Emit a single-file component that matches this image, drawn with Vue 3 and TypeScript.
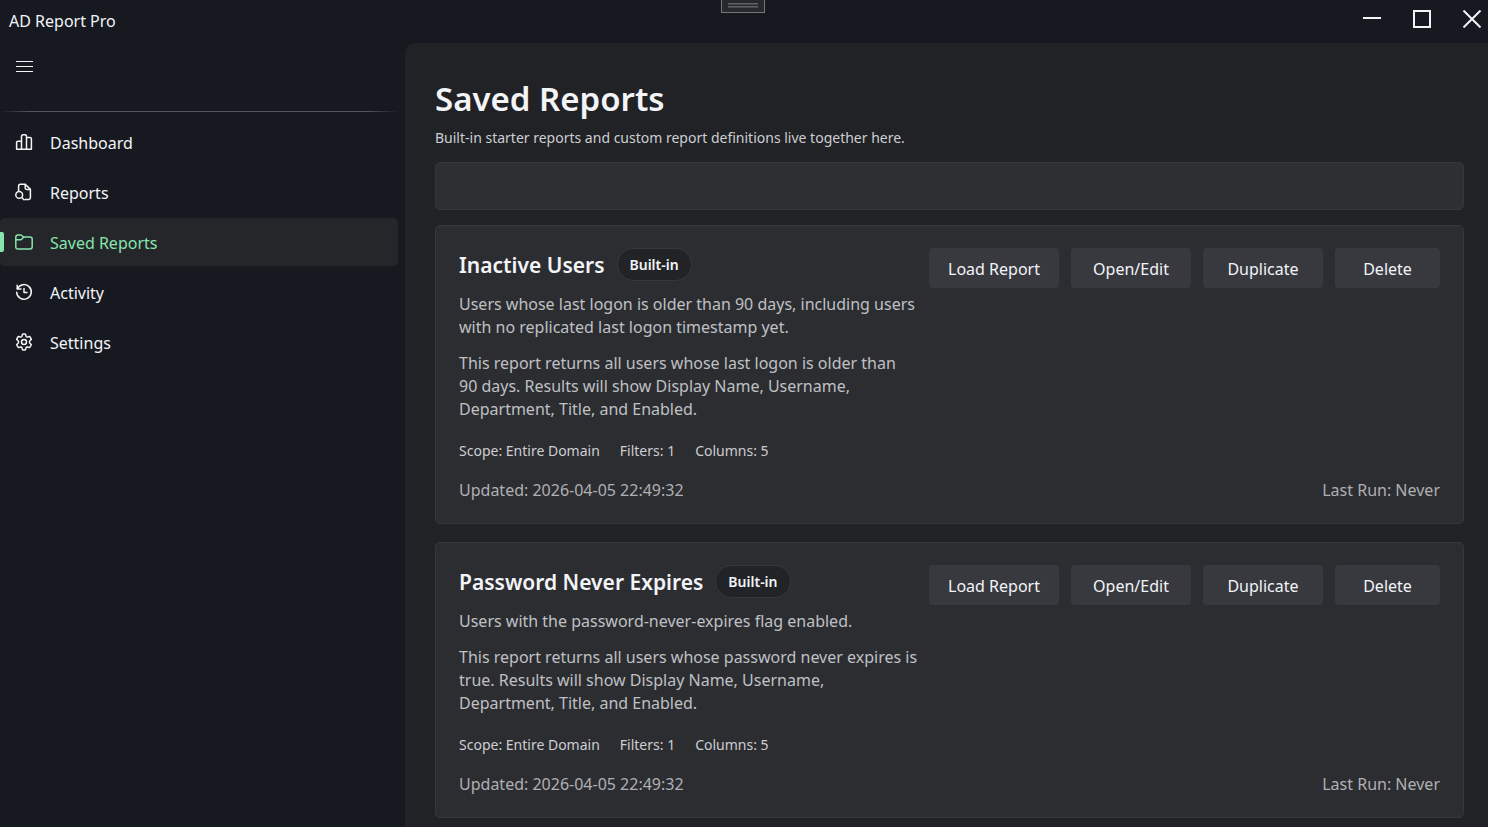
<script setup lang="ts">
import { ref } from 'vue'

interface NavItem {
  id: string
  label: string
}

interface Report {
  name: string
  description: string
  summary: string
  scope: string
  filters: number
  columns: number
  updated: string
  lastRun: string
}

const navItems: NavItem[] = [
  { id: 'dashboard', label: 'Dashboard' },
  { id: 'reports', label: 'Reports' },
  { id: 'saved', label: 'Saved Reports' },
  { id: 'activity', label: 'Activity' },
  { id: 'settings', label: 'Settings' },
]

const active = ref('saved')

const reports: Report[] = [
  {
    name: 'Inactive Users',
    description:
      'Users whose last logon is older than 90 days, including users with no replicated last logon timestamp yet.',
    summary:
      'This report returns all users whose last logon is older than 90\u00a0days. Results will show Display Name, Username, Department, Title, and Enabled.',
    scope: 'Entire Domain',
    filters: 1,
    columns: 5,
    updated: '2026-04-05 22:49:32',
    lastRun: 'Never',
  },
  {
    name: 'Password Never Expires',
    description: 'Users with the password-never-expires flag enabled.',
    summary:
      'This report returns all users whose password never expires is true. Results will show Display Name, Username, Department, Title, and Enabled.',
    scope: 'Entire Domain',
    filters: 1,
    columns: 5,
    updated: '2026-04-05 22:49:32',
    lastRun: 'Never',
  },
]
</script>

<template>
  <div class="window">
    <header class="titlebar">
      <span class="app-name">AD Report Pro</span>
      <div class="grip"><span></span><span></span></div>
      <div class="window-controls">
        <button type="button" aria-label="Minimize">
          <svg width="18" height="18" viewBox="0 0 18 18"><path d="M0 8H18" /></svg>
        </button>
        <button type="button" aria-label="Maximize">
          <svg width="18" height="18" viewBox="0 0 18 18"><path d="M1 1H17V17H1Z" /></svg>
        </button>
        <button type="button" aria-label="Close">
          <svg width="18" height="18" viewBox="0 0 18 18"><path d="M0.5 0.5L17.5 17.5M17.5 0.5L0.5 17.5" /></svg>
        </button>
      </div>
    </header>

    <div class="body">
      <aside class="sidebar">
        <button type="button" class="menu-toggle" aria-label="Toggle navigation">
          <svg width="18" height="12" viewBox="0 0 18 12"><path d="M1 1.5H18M1 6.5H18M1 11.5H18" /></svg>
        </button>
        <div class="divider"></div>
        <nav>
          <a
            v-for="item in navItems"
            :key="item.id"
            href="#"
            class="nav-item"
            :class="{ active: item.id === active }"
            @click.prevent="active = item.id"
          >
            <svg class="nav-icon" width="20" height="20" viewBox="0 0 20 20">
              <template v-if="item.id === 'dashboard'">
                <path d="M7.5 17.2V4.3Q7.5 2.8 9 2.8H11Q12.5 2.8 12.5 4.3V17.2" />
                <path d="M7.5 9.2H4Q2.6 9.2 2.6 10.6V17.2H17.4V7Q17.4 5.6 16 5.6H12.5" />
              </template>
              <template v-else-if="item.id === 'reports'">
                <path d="M4.6 9V4Q4.6 2.2 6.3 2.2H11.2L16.4 7.4V15.8Q16.4 17.5 14.7 17.5H11" />
                <path d="M11.2 2.4V6Q11.2 7.4 12.6 7.4H16.2" />
                <circle cx="5.2" cy="12.9" r="3.4" />
                <path d="M7.7 15.4L10 17.8" />
              </template>
              <template v-else-if="item.id === 'saved'">
                <path d="M1.8 14.8V5.3Q1.8 3 4 3H6.5Q7.2 3 7.7 3.5L9.6 5.1H15.9Q18.2 5.1 18.2 7.3V14.8Q18.2 17 16 17H4Q1.8 17 1.8 14.8Z" />
                <path d="M2 7.7H6.7Q7.3 7.7 7.7 7.3L9.6 5.3" />
              </template>
              <template v-else-if="item.id === 'activity'">
                <path d="M3.4 6.8A7.3 7.3 0 1 1 2.7 10.2" />
                <path d="M3.2 3.2V7H7M10 6.4V10.6H13" />
              </template>
              <template v-else>
                <path
                  d="M8.4 2.3Q10 1.9 11.6 2.3L12 4.2Q12.4 5.3 13.5 5L15.4 4.4Q16.8 5.8 17.3 7.4L15.9 8.7Q14.8 10 15.9 11.3L17.3 12.6Q16.8 14.2 15.4 15.6L13.5 15Q12.4 14.7 12 15.8L11.6 17.7Q10 18.1 8.4 17.7L8 15.8Q7.6 14.7 6.5 15L4.6 15.6Q3.2 14.2 2.7 12.6L4.1 11.3Q5.2 10 4.1 8.7L2.7 7.4Q3.2 5.8 4.6 4.4L6.5 5Q7.6 5.3 8 4.2Z"
                />
                <circle cx="10" cy="10" r="2.5" />
              </template>
            </svg>
            <span>{{ item.label }}</span>
          </a>
        </nav>
      </aside>

      <main class="content">
        <h1>Saved Reports</h1>
        <p class="subtitle">Built-in starter reports and custom report definitions live together here.</p>
        <div class="toolbar"></div>

        <article v-for="report in reports" :key="report.name" class="card">
          <div class="card-top">
            <div class="card-text">
              <div class="card-heading">
                <h2>{{ report.name }}</h2>
                <span class="badge">Built-in</span>
              </div>
              <p class="description">{{ report.description }}</p>
              <p class="summary">{{ report.summary }}</p>
            </div>
            <div class="actions">
              <button type="button" class="wide">Load Report</button>
              <button type="button">Open/Edit</button>
              <button type="button">Duplicate</button>
              <button type="button" class="narrow">Delete</button>
            </div>
          </div>
          <div class="meta">
            <span>Scope: {{ report.scope }}</span>
            <span>Filters: {{ report.filters }}</span>
            <span>Columns: {{ report.columns }}</span>
          </div>
          <footer class="card-footer">
            <span>Updated: {{ report.updated }}</span>
            <span>Last Run: {{ report.lastRun }}</span>
          </footer>
        </article>
      </main>
    </div>
  </div>
</template>

<style>
body {
  margin: 0;
  background: #161920;
}
</style>

<style scoped>
.window {
  display: flex;
  flex-direction: column;
  min-height: 100vh;
  background: #161920;
  color: #f3f4f8;
  font-family: 'Segoe UI', 'Noto Sans', 'Open Sans', sans-serif;
  font-size: 16px;
  line-height: 23px;
}

button {
  border: 0;
  padding: 0;
  color: inherit;
  font: inherit;
  cursor: pointer;
}

h1,
h2,
p {
  margin: 0;
}

svg {
  display: block;
  fill: none;
  stroke: currentColor;
}

.titlebar {
  position: relative;
  display: flex;
  justify-content: space-between;
  height: 43px;
  overflow: hidden;
}

.app-name {
  padding: 10px 9px 0;
}

.grip {
  position: absolute;
  top: 0;
  left: 50%;
  display: flex;
  flex-direction: column;
  gap: 1px;
  width: 30px;
  height: 9px;
  padding: 3px 6px 0;
  margin-left: -23px;
  border: 1px solid #74767a;
  border-top: 0;
  background: #25282c;
}

.grip span {
  height: 1px;
  border-top: 1px solid #606266;
  background: #45474b;
}

.window-controls {
  display: flex;
  margin-right: -9px;
}

.window-controls button {
  display: grid;
  place-items: center;
  width: 50px;
  height: 38px;
  background: transparent;
}

.window-controls svg {
  stroke-width: 2;
}

.body {
  display: flex;
  flex: 1;
}

.sidebar {
  width: 398px;
  flex: none;
  margin-right: 7px;
}

.menu-toggle {
  display: grid;
  place-items: center;
  width: 48px;
  height: 46px;
  background: transparent;
}

.divider {
  height: 1px;
  margin: 22px 0 6px;
  background: linear-gradient(90deg, #161920, #53555a 30px, #53555a calc(100% - 30px), #161920);
}

.nav-item {
  position: relative;
  display: flex;
  align-items: center;
  gap: 16px;
  height: 48px;
  margin-bottom: 2px;
  padding-left: 14px;
  border-radius: 5px;
  color: inherit;
  text-decoration: none;
}

.nav-item span {
  padding-top: 2px;
}

.nav-icon {
  stroke-width: 1.5;
  stroke-linejoin: round;
  stroke-linecap: round;
}

.nav-item.active {
  background: #242629;
  color: #86e5ad;
}

.nav-item.active::before {
  content: '';
  position: absolute;
  left: 0;
  top: 14px;
  width: 4px;
  height: 20px;
  border-radius: 0 2px 2px 0;
  background: #86e5ad;
}

.content {
  flex: 1;
  min-width: 0;
  box-sizing: border-box;
  padding: 32px 24px 9px 30px;
  border-radius: 10px 0 0;
  background: #212226;
}

h1 {
  font-size: 33px;
  font-weight: 600;
  line-height: 48px;
}

.subtitle {
  margin-top: 5px;
  color: #cdced2;
  font-size: 14px;
  line-height: 20px;
}

.toolbar {
  height: 46px;
  margin: 14px 0 15px;
  border: 1px solid #36373c;
  border-radius: 5px;
  background: #2e2f33;
}

.card {
  margin-bottom: 18px;
  padding: 22px 23px 21px;
  border: 1px solid #37383d;
  border-radius: 5px;
  background: #2c2d31;
}

.card:last-child {
  margin-bottom: 0;
}

.card-top {
  display: flex;
}

.card-text {
  flex: 1;
  min-width: 0;
  padding-right: 8px;
}

.card-heading {
  display: flex;
  align-items: center;
  gap: 12px;
  height: 33px;
}

h2 {
  padding-top: 2px;
  font-size: 21px;
  font-weight: 600;
  line-height: 31px;
}

.badge {
  padding: 0 12px;
  border: 1px solid #37383d;
  border-radius: 16px;
  background: #222327;
  font-size: 14px;
  font-weight: 600;
  line-height: 31px;
}

.description,
.summary {
  color: #bfc0c4;
}

.description {
  margin-top: 12px;
}

.summary {
  margin-top: 13px;
}

.actions {
  display: flex;
  flex: none;
  align-items: flex-start;
  gap: 12px;
}

.actions button {
  width: 120px;
  height: 40px;
  padding-top: 2px;
  border-radius: 4px;
  background: #38393e;
}

.actions .wide {
  width: 130px;
}

.actions .narrow {
  width: 105px;
}

.meta {
  display: flex;
  gap: 20px;
  margin-top: 20px;
  color: #cdced2;
  font-size: 14px;
  line-height: 20px;
}

.card-footer {
  display: flex;
  justify-content: space-between;
  margin-top: 18px;
  color: #afb0b4;
}
</style>
